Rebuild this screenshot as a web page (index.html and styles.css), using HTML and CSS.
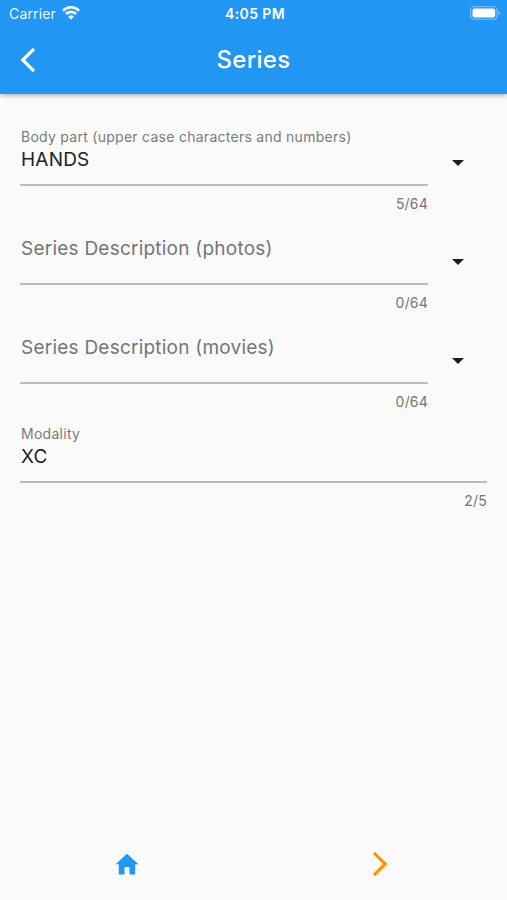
FILE: index.html
```
<!DOCTYPE html>
<html lang="en">
<head>
<meta charset="utf-8">
<title>Series</title>
<link rel="stylesheet" href="styles.css">
</head>
<body>
<header class="top">
  <div class="status">
    <div class="carrier"><span>Carrier</span>
      <svg class="wifi" width="18" height="14" viewBox="0 0 18 14" fill="none" stroke="#fff" stroke-width="2.7"><path d="M.9 4.6Q9-2.2 17.1 4.6M3.9 7.9Q9 3.7 14.1 7.9"/><path d="M9 13.8 6 10.5Q9 8 12 10.5Z" fill="#fff" stroke="none"/></svg>
    </div>
    <time class="clock">4:05 PM</time>
    <svg class="battery" width="31" height="14" viewBox="0 0 31 14"><rect x=".7" y=".7" width="26.3" height="12.6" rx="3.6" fill="none" stroke="#fff" stroke-opacity=".35" stroke-width="1.3"/><rect x="2.5" y="2.5" width="22.7" height="9" rx="2" fill="#fff"/><path d="M28.4 4.8Q30.3 5.5 30.3 7T28.4 9.2Z" fill="#fff" fill-opacity=".4"/></svg>
  </div>
  <div class="bar">
    <svg class="back" width="16" height="26" viewBox="0 0 16 26" fill="none" stroke="#fff" stroke-width="3.3"><path d="M14 1.8 2.8 13 14 24.2"/></svg>
    <h1 class="title">Series</h1>
  </div>
</header>
<main class="form">
  <div class="row">
    <div class="field">
      <div class="label">Body part (upper case characters and numbers)</div>
      <div class="value">HANDS</div>
      <div class="count">5/64</div>
    </div>
    <svg class="caret" width="12" height="6" viewBox="0 0 12 6"><path d="M0 0H12L6 6Z" fill="#1d1d1d"/></svg>
  </div>
  <div class="row">
    <div class="field">
      <div class="placeholder">Series Description (photos)</div>
      <div class="count">0/64</div>
    </div>
    <svg class="caret" width="12" height="6" viewBox="0 0 12 6"><path d="M0 0H12L6 6Z" fill="#1d1d1d"/></svg>
  </div>
  <div class="row">
    <div class="field">
      <div class="placeholder">Series Description (movies)</div>
      <div class="count">0/64</div>
    </div>
    <svg class="caret" width="12" height="6" viewBox="0 0 12 6"><path d="M0 0H12L6 6Z" fill="#1d1d1d"/></svg>
  </div>
  <div class="row">
    <div class="field">
      <div class="label">Modality</div>
      <div class="value">XC</div>
      <div class="count">2/5</div>
    </div>
  </div>
</main>
<nav class="bottom">
  <div class="tab"><svg width="24" height="22" viewBox="0 0 24 22"><path d="M12 .7 23.5 11.2H20.2V21.4H14.5V14H9.5V21.4H3.8V11.2H.5Z" fill="#2196f3"/></svg></div>
  <div class="tab"><svg width="16" height="26" viewBox="0 0 16 26" fill="none" stroke="#ff9800" stroke-width="3.3"><path d="M2 1.8 13.2 13 2 24.2"/></svg></div>
</nav>
</body>
</html>
```
FILE: styles.css
```
* { box-sizing: border-box; }
body {
  margin: 0;
  height: 900px;
  display: flex;
  flex-direction: column;
  background: #fafafa;
  font-family: Inter, "Liberation Sans", sans-serif;
}
svg { display: block; flex: none; }
.top {
  height: 94px;
  background: #2196f3;
  color: #fff;
  box-shadow: 0 1px 5px rgba(0, 0, 0, .35);
}
.status {
  height: 27px;
  padding: 0 6px 0 9px;
  display: grid;
  grid-template-columns: 1fr auto 1fr;
  align-items: center;
}
.carrier {
  display: flex;
  align-items: center;
  gap: 6px;
  font-size: 14px;
  letter-spacing: .15px;
  opacity: .93;
}
.wifi { margin-top: -2px; }
.clock { font-size: 14px; font-weight: 600; letter-spacing: .4px; }
.battery { justify-self: end; margin-top: -1px; }
.bar {
  height: 65px;
  padding: 0 20px;
  display: grid;
  grid-template-columns: 1fr auto 1fr;
  align-items: center;
}
.title { margin: 0; font-size: 24px; font-weight: 500; letter-spacing: .25px; }
.form { flex: 1; padding: 33px 20px 0; }
.row { height: 99px; display: flex; }
.field { flex: 1; }
.label {
  height: 20px;
  padding-left: 1px;
  line-height: 20px;
  font-size: 14px;
  letter-spacing: .27px;
  color: #7a7a7a;
  white-space: nowrap;
}
.value, .placeholder {
  padding-left: 1px;
  border-bottom: 2px solid #bcbcbc;
  font-size: 19px;
}
.value { height: 39px; line-height: 25px; letter-spacing: .2px; color: #222; }
.placeholder {
  height: 59px;
  padding-top: 10px;
  line-height: 25px;
  letter-spacing: .23px;
  color: #757575;
}
.count {
  padding-top: 8px;
  line-height: 20px;
  font-size: 14px;
  letter-spacing: .2px;
  text-align: right;
  color: #757575;
}
.caret { margin: 33px 23px 0 24px; }
.row .caret { margin-right: 23px; }
.row:not(:last-child) .field { flex: 0 0 408px; }
.bottom {
  height: 72px;
  border-top: 1px solid #f6f6f6;
  padding-bottom: 1px;
  display: flex;
}
.tab { flex: 1; display: flex; align-items: center; justify-content: center; }
```
